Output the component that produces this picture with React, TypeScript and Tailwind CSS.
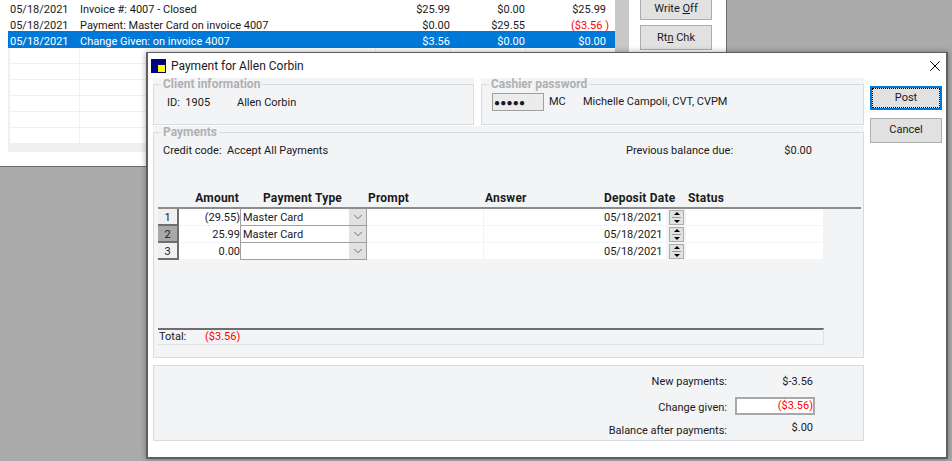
import { ChevronDown, X } from 'lucide-react';

const font = { fontFamily: 'Roboto, "Liberation Sans", Arial, sans-serif' };

const backRows = [
  { date: '05/18/2021', text: 'Invoice #: 4007 - Closed', a: '$25.99', b: '$0.00', c: '$25.99' },
  { date: '05/18/2021', text: 'Payment: Master Card on invoice 4007', a: '$0.00', b: '$29.55', c: '($3.56 )', red: true },
  { date: '05/18/2021', text: 'Change Given: on invoice 4007', a: '$3.56', b: '$0.00', c: '$0.00', selected: true },
];

const payRows = [
  { n: '1', amount: '(29.55)', type: 'Master Card' },
  { n: '2', amount: '25.99', type: 'Master Card', active: true },
  { n: '3', amount: '0.00', type: '' },
];

const BackWindow = () => (
  <div className="absolute left-0 top-0 flex h-[167px] w-[727px] border-r border-b border-[#6b6b6b] bg-white pl-[8px]">
    <div className="flex h-[152px] w-[632px]">
      <div className="w-[607px] bg-[#f0f0f0]">
        {backRows.map((r) => (
          <div
            key={r.text}
            className={`grid grid-cols-[72px_296px_75px_75px_87px] items-center text-[11px] ${
              r.selected ? '-mt-px h-[17px] bg-[#0078d7] pt-[3px] text-white' : 'h-[16px] bg-white pt-[2px] text-[#1a1a1a]'
            }`}
          >
            <span className="pl-[2px]">{r.date}</span>
            <span>{r.text}</span>
            <span className="pr-[1px] text-right">{r.a}</span>
            <span className="pr-[1px] text-right">{r.b}</span>
            <span className={`text-right ${r.red ? 'pr-[4px] text-[#ff0000]' : 'pr-[7px]'}`}>{r.c}</span>
          </div>
        ))}
        {[0, 1, 2, 3, 4, 5].map((i) => (
          <div key={i} className="ml-[2px] grid h-[16px] grid-cols-[70px_296px_75px_75px_87px] border-b border-[#f0f0f0] bg-white">
            <span className="border-r border-[#f0f0f0]" />
            <span className="border-r border-[#f0f0f0]" />
            <span className="border-r border-[#f0f0f0]" />
            <span className="border-r border-[#f0f0f0]" />
            <span />
          </div>
        ))}
      </div>
      <div className="w-[14px] bg-[#c8c8c8]" />
    </div>
    <div className="flex flex-col gap-[5px]">
      <button className="h-[20px] w-[72px] border border-t-0 border-[#adadad] bg-[#e1e1e1] text-[11px] text-[#1a1a1a]">
        Write <span className="underline">O</span>ff
      </button>
      <button className="h-[25px] w-[72px] border border-[#adadad] bg-[#e1e1e1] pt-px text-[11px] text-[#1a1a1a]">
        Rt<span className="underline">n</span> Chk
      </button>
    </div>
  </div>
);

const Panel = ({ title, className, children }: { title: string; className: string; children: React.ReactNode }) => (
  <div className={`bg-[#f3f4f6] ${className}`}>
    <fieldset className="h-full border border-[#d9dbde]">
      <legend className="ml-[7px] px-[2px] text-[12px] leading-[13px] font-bold text-[#b0b0b0]">{title}</legend>
      {children}
    </fieldset>
  </div>
);

const Spinner = () => (
  <div className="ml-[3px] flex h-[15px] w-[15px] flex-col items-center justify-center gap-[2px] border border-[#adadad] bg-[#e1e1e1]">
    <span className="h-0 w-0 border-x-[3px] border-b-[3px] border-x-transparent border-b-black" />
    <span className="h-px w-[9px] bg-[#9a9a9a]" />
    <span className="h-0 w-0 border-x-[3px] border-t-[3px] border-x-transparent border-t-black" />
  </div>
);

const PayGrid = () => (
  <div className="ml-[4px] mr-[2px]">
    <div className="flex h-[17px] items-end border-b-2 border-[#8c8c8c] text-[12px] font-bold tracking-[0.2px] text-[#1a1a1a]">
      <span className="w-[81px] text-right">Amount</span>
      <span className="w-[127px] text-center">Payment Type</span>
      <span className="w-[117px] pl-[2px]">Prompt</span>
      <span className="w-[119px] pl-[2px]">Answer</span>
      <span className="w-[84px] pl-[2px]">Deposit Date</span>
      <span className="pl-[2px]">Status</span>
    </div>
    {payRows.map((r) => (
      <div key={r.n} className="flex h-[17px] w-[666px] text-[11px] text-[#1a1a1a]">
        <span
          className={`flex w-[21px] items-center justify-center border-r-2 border-b-2 border-[#6e6e6e] pt-[3px] ${
            r.active ? 'bg-[#a8a8a8]' : 'bg-[#f0f0f0]'
          }`}
        >
          {r.n}
        </span>
        <span className="flex w-[61px] items-center justify-end border-b border-[#f3f4f6] bg-white pt-[2px]">{r.amount}</span>
        <div className="flex w-[127px] border-x border-b border-[#a0a0a0] bg-white">
          <span className="flex-1 pl-[2px] leading-[18px]">{r.type}</span>
          <span className="flex w-[17px] items-center justify-center bg-[#e1e1e1]">
            <ChevronDown size={14} strokeWidth={1.25} className="text-[#444444]" />
          </span>
        </div>
        <span className="w-[117px] border-r border-b border-[#f3f4f6] bg-white" />
        <span className="w-[119px] border-b border-[#f3f4f6] bg-white" />
        <span className="flex w-[63px] items-center border-b border-[#f3f4f6] bg-white pl-[1px] pt-[2px]">05/18/2021</span>
        <span className="flex w-[20px] items-center">
          <Spinner />
        </span>
        <span className="w-[137px] border-b border-[#f3f4f6] bg-white" />
      </div>
    ))}
    <div className="mt-[68px] flex h-[17px] w-[666px] items-center border-t-2 border-r border-b border-t-[#6e6e6e] border-r-[#dfe1e3] border-b-[#dfe1e3] text-[11px] text-[#1a1a1a]">
      <span className="w-[47px] pl-[1px]">Total:</span>
      <span className="text-[#ff0000]">($3.56)</span>
    </div>
  </div>
);

const Dialog = () => (
  <div className="absolute left-[146px] top-[52px] flex h-[407px] w-[802px] flex-col border-2 border-t border-[#5f5f5f] bg-white shadow-[0_0_6px_rgba(0,0,0,0.35)]">
    <div className="flex h-[25px] shrink-0 items-center pl-[3px] pr-[2px]">
      <div className="flex h-[14px] w-[15px] bg-[#000080] pl-[7px] pt-[6px]">
        <div className="h-[7px] w-[7px] bg-[#ffff00]" />
      </div>
      <span className="ml-[5px] flex-1 text-[12px] text-[#1a1a1a]">Payment for Allen Corbin</span>
      <X size={18} strokeWidth={1.3} className="text-black" />
    </div>
    <div className="flex flex-1 pl-[5px]">
      <div className="w-[711px]">
        <div className="flex gap-[7px]">
          <Panel title="Client information" className="h-[47px] w-[321px]">
            <div className="flex pl-[13px] pt-[3px] text-[11px] leading-[18px] text-[#1a1a1a]">
              <span className="w-[70px]">ID:&nbsp; 1905</span>
              <span>Allen Corbin</span>
            </div>
          </Panel>
          <Panel title="Cashier password" className="h-[47px] w-[383px]">
            <div className="flex items-center pl-[10px] pt-[2px] text-[11px] text-[#1a1a1a]">
              <span className="flex h-[18px] w-[52px] items-center border border-[#a0a0a0] bg-[#ececec] pl-[1px] text-[10px] tracking-[0.2px]">●●●●●</span>
              <span className="ml-[5px] w-[34px]">MC</span>
              <span>Michelle Campoli, CVT, CVPM</span>
            </div>
          </Panel>
        </div>
        <Panel title="Payments" className="mt-[1px] h-[232px]">
          <div className="flex pl-[9px] pt-[3px] text-[11px] leading-[18px] whitespace-nowrap text-[#1a1a1a]">
            <span className="w-[463px]">Credit code:&nbsp; Accept All Payments</span>
            <span className="w-[106px]">Previous balance due:</span>
            <span className="w-[80px] text-right">$0.00</span>
          </div>
          <div className="h-[32px]" />
          <PayGrid />
        </Panel>
        <div className="mt-[7px] flex h-[76px] flex-col items-end border border-[#d9dbde] bg-[#f3f4f6] pr-[50px] pt-[7px] text-[11px] text-[#1a1a1a]">
          <div className="flex h-[18px] items-center">
            <span className="w-[149px] text-right">New payments:</span>
            <span className="w-[86px] text-right">$-3.56</span>
          </div>
          <div className="mt-[5px] flex items-center">
            <span className="w-[149px] pt-[4px] text-right">Change given:</span>
            <span className="-mr-[2px] ml-[8px] flex h-[18px] w-[80px] items-center justify-end border-2 border-[#a8a8a8] bg-white text-[#ff0000]">($3.56)</span>
          </div>
          <div className="mt-[7px] flex h-[16px] items-center">
            <span className="w-[149px] text-right">Balance after payments:</span>
            <span className="mb-[6px] w-[86px] text-right">$.00</span>
          </div>
        </div>
      </div>
      <div className="ml-[6px] flex flex-col gap-[8px] pt-[8px] text-[11px] text-[#1a1a1a]">
        <button className="flex h-[24px] w-[72px] items-center justify-center border-2 border-[#0078d7] bg-[#e1e1e1] outline-1 -outline-offset-3 outline-black outline-dotted">Post</button>
        <button className="h-[25px] w-[72px] border border-[#adadad] bg-[#e1e1e1]">Cancel</button>
      </div>
    </div>
  </div>
);

export default function App() {
  return (
    <div className="relative h-[461px] w-[952px] overflow-hidden bg-[#ababab]" style={font}>
      <BackWindow />
      <Dialog />
    </div>
  );
}
